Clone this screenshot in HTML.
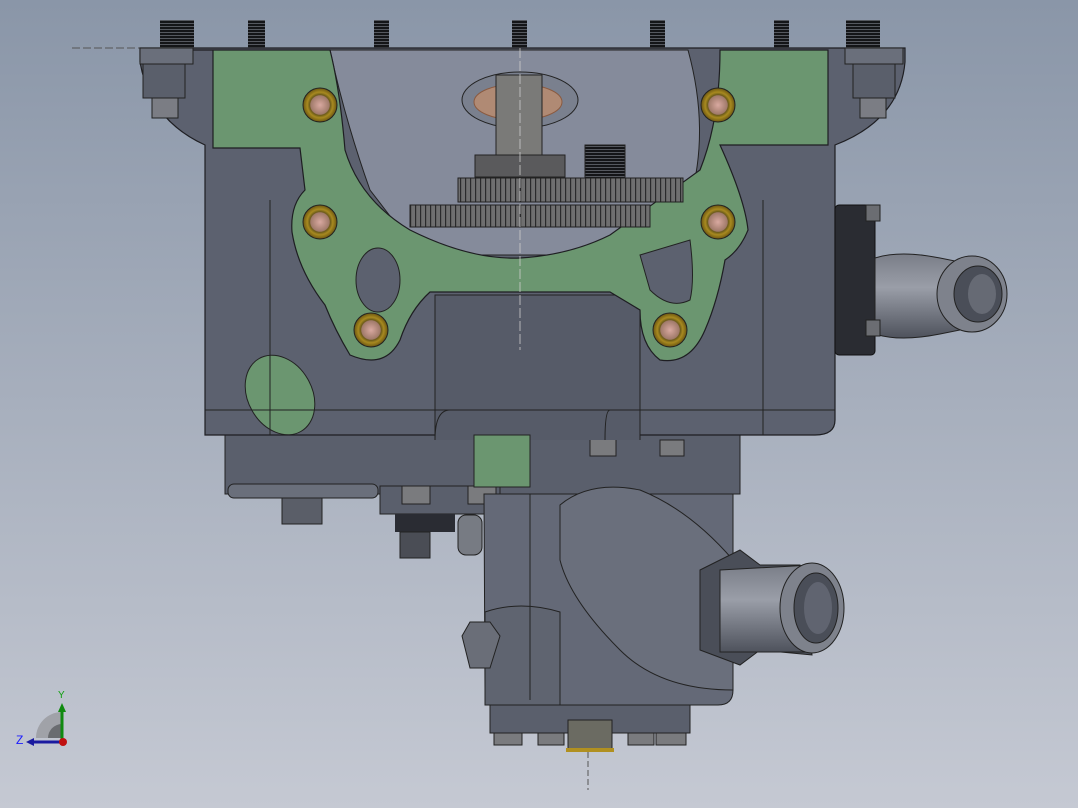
<!DOCTYPE html>
<html><head><meta charset="utf-8"><style>
html,body{margin:0;padding:0;width:1078px;height:808px;overflow:hidden}
svg{display:block}
</style></head><body>
<svg width="1078" height="808" viewBox="0 0 1078 808" xmlns="http://www.w3.org/2000/svg" font-family="Liberation Sans, sans-serif">
<defs>
<linearGradient id="bg" x1="0" y1="0" x2="0" y2="1">
<stop offset="0" stop-color="#8a96a8"/><stop offset="0.5" stop-color="#a7afbd"/><stop offset="1" stop-color="#c5c9d3"/>
</linearGradient>
<linearGradient id="pipe" x1="0" y1="0" x2="0" y2="1">
<stop offset="0" stop-color="#7a7e88"/><stop offset="0.4" stop-color="#9a9ea8"/><stop offset="1" stop-color="#4e525c"/>
</linearGradient>
<radialGradient id="boss" cx="0.5" cy="0.5" r="0.5">
<stop offset="0" stop-color="#d9a9a0"/><stop offset="0.55" stop-color="#a07a6a"/><stop offset="0.6" stop-color="#6b5a1a"/><stop offset="0.75" stop-color="#a88a20"/><stop offset="1" stop-color="#6b5510"/>
</radialGradient>
<pattern id="thread" width="4" height="3" patternUnits="userSpaceOnUse">
<rect width="4" height="3" fill="#55585f"/><rect width="4" height="2" fill="#141518"/>
</pattern>
<pattern id="teeth" width="5" height="4" patternUnits="userSpaceOnUse">
<rect width="5" height="4" fill="#6f6f70"/><rect width="1.2" height="4" fill="#2a2a2c"/>
</pattern>
</defs>
<rect width="1078" height="808" fill="url(#bg)"/>
<line x1="72" y1="48" x2="520" y2="48" stroke="#555" stroke-width="1" stroke-dasharray="8,3"/>

<!-- studs -->
<g fill="url(#thread)">
<rect x="160" y="20" width="34" height="28"/>
<rect x="248" y="20" width="17" height="28"/>
<rect x="374" y="20" width="15" height="28"/>
<rect x="512" y="20" width="15" height="28"/>
<rect x="650" y="20" width="15" height="28"/>
<rect x="774" y="20" width="15" height="28"/>
<rect x="846" y="20" width="34" height="28"/>
</g>

<!-- lower housing parts -->
<rect x="225" y="432" width="515" height="62" fill="#5a5f6c" stroke="#222" stroke-width="1"/>
<g fill="#7a7b7e" stroke="#222">
<rect x="495" y="436" width="24" height="10"/>
<rect x="590" y="438" width="26" height="18"/>
<rect x="660" y="440" width="24" height="16"/>
</g>
<rect x="228" y="484" width="150" height="14" rx="6" fill="#6a6f7b" stroke="#222"/>
<rect x="282" y="498" width="40" height="26" fill="#5a5e68" stroke="#222"/>
<rect x="380" y="486" width="120" height="28" fill="#5a5f6c" stroke="#222"/>
<rect x="402" y="486" width="28" height="18" fill="#7a7b7e" stroke="#222"/>
<rect x="468" y="486" width="28" height="18" fill="#7a7b7e" stroke="#222"/>
<rect x="395" y="514" width="60" height="18" fill="#2a2c33"/>
<rect x="400" y="532" width="30" height="26" fill="#4a4d55" stroke="#222"/>
<rect x="458" y="515" width="24" height="40" rx="8" fill="#777b83" stroke="#222"/>
<path d="M484 494 H733 V690 Q733 705 718 705 H500 Q485 705 485 690 Z" fill="#646977" stroke="#222"/>
<path d="M560 505 Q590 480 640 490 Q690 510 733 560 L733 690 Q660 690 620 650 Q570 600 560 560 Z" fill="#6a6f7c" stroke="#222"/>
<path d="M485 612 Q520 600 560 612 L560 705 H485 Z" fill="#5f6470" stroke="#222"/>
<line x1="530" y1="494" x2="530" y2="700" stroke="#222"/>
<rect x="490" y="705" width="200" height="28" fill="#5a5f6c" stroke="#222"/>
<g fill="#7a7b7e" stroke="#222">
<rect x="494" y="733" width="28" height="12"/><rect x="538" y="733" width="26" height="12"/>
<rect x="628" y="733" width="26" height="12"/><rect x="656" y="733" width="30" height="12"/>
</g>
<rect x="568" y="720" width="44" height="30" fill="#6b6b62" stroke="#222"/>
<rect x="566" y="748" width="48" height="4" fill="#b09020"/>
<polygon points="462,636 470,622 490,622 500,636 490,668 470,668" fill="#6a6e78" stroke="#222"/>
<line x1="588" y1="752" x2="588" y2="790" stroke="#555" stroke-dasharray="6,3"/>

<!-- lower pipe -->
<path d="M700 570 L740 550 L760 565 L800 565 L812 655 L760 650 L740 665 L700 650 Z" fill="#4a4e58" stroke="#222"/>
<path d="M720 570 L812 565 L812 652 L720 652 Z" fill="url(#pipe)" stroke="#222"/>
<ellipse cx="812" cy="608" rx="32" ry="45" fill="#7e828c" stroke="#222"/>
<ellipse cx="816" cy="608" rx="22" ry="35" fill="#4a4e58" stroke="#222"/>
<ellipse cx="818" cy="608" rx="14" ry="26" fill="#606470"/>

<!-- main body -->
<path d="M140 48 H905 V62 Q900 120 835 145 V420 Q835 435 815 435 H205 V145 Q150 120 140 62 Z" fill="#5c616f" stroke="#1e1e22" stroke-width="1.2"/>
<rect x="140" y="48" width="53" height="16" fill="#6a6f7b" stroke="#222"/>
<rect x="845" y="48" width="58" height="16" fill="#6a6f7b" stroke="#222"/>
<rect x="143" y="64" width="42" height="34" fill="#5a5f6b" stroke="#222"/>
<rect x="853" y="64" width="42" height="34" fill="#5a5f6b" stroke="#222"/>
<rect x="152" y="98" width="26" height="20" fill="#7b7d84" stroke="#222"/>
<rect x="860" y="98" width="26" height="20" fill="#7b7d84" stroke="#222"/>
<!-- inner cavity -->
<path d="M330 50 H688 Q710 130 690 200 L600 255 L420 255 L370 190 Q345 120 330 50 Z" fill="#858b9b" stroke="#222"/>
<path d="M435 440 V295 H640 V440" fill="#565b68" stroke="#222"/>
<!-- green gasket -->
<path fill="#6b9670" stroke="#1e1e22" stroke-width="1.2" d="
M193 50 H330 Q340 90 345 150 Q360 200 410 230 Q470 260 520 258 Q570 255 610 235 L700 170 Q720 120 720 50 H828 V145 H720 Q745 200 748 230 Q740 250 725 260 Q718 300 705 330 Q690 365 660 360 Q640 345 640 310 L610 292 H430 Q410 310 400 340 Q385 370 350 355 Q335 330 325 305 Q298 270 292 232 Q290 205 305 190 L300 148 L213 148 L213 50 Z"/>
<ellipse cx="378" cy="280" rx="22" ry="32" fill="#5c616f" stroke="#222"/>
<path d="M640 255 L690 240 Q695 280 690 300 Q670 310 650 290 Z" fill="#5c616f" stroke="#222"/>
<ellipse cx="280" cy="395" rx="32" ry="42" fill="#6b9670" stroke="#222" transform="rotate(-30 280 395)"/>
<rect x="474" y="435" width="56" height="52" fill="#6b9670" stroke="#222"/>
<!-- bosses -->
<g stroke="#222" stroke-width="1">
<circle cx="320" cy="105" r="17" fill="url(#boss)"/>
<circle cx="718" cy="105" r="17" fill="url(#boss)"/>
<circle cx="320" cy="222" r="17" fill="url(#boss)"/>
<circle cx="718" cy="222" r="17" fill="url(#boss)"/>
<circle cx="371" cy="330" r="17" fill="url(#boss)"/>
<circle cx="670" cy="330" r="17" fill="url(#boss)"/>
</g>
<!-- shaft & gears -->
<ellipse cx="520" cy="100" rx="58" ry="28" fill="#7a808e" stroke="#222"/>
<ellipse cx="518" cy="102" rx="44" ry="18" fill="#b08a74" stroke="#8a5a40"/>
<rect x="496" y="75" width="46" height="80" fill="#7a7a78" stroke="#222"/>
<rect x="475" y="155" width="90" height="22" fill="#5a5a5c" stroke="#222"/>
<rect x="585" y="145" width="40" height="35" fill="url(#thread)" stroke="#222"/>
<rect x="458" y="178" width="225" height="24" fill="url(#teeth)" stroke="#222"/>
<rect x="410" y="205" width="240" height="22" fill="url(#teeth)" stroke="#222"/>
<line x1="520" y1="48" x2="520" y2="350" stroke="#ccc" stroke-dasharray="10,3" stroke-width="0.8"/>
<!-- side lines -->
<g stroke="#222" fill="none" stroke-width="1">
<line x1="270" y1="200" x2="270" y2="435"/>
<line x1="763" y1="200" x2="763" y2="435"/>
<path d="M205 410 H835"/>
<path d="M435 440 Q435 410 450 410 M610 410 Q605 410 605 440"/>
</g>

<!-- right pipe -->
<rect x="835" y="205" width="40" height="150" rx="4" fill="#2a2c32" stroke="#111"/>
<path d="M875 258 Q900 250 940 258 L960 262 L960 330 L940 334 Q900 342 875 334 Z" fill="url(#pipe)" stroke="#222"/>
<ellipse cx="972" cy="294" rx="35" ry="38" fill="#7e828c" stroke="#222"/>
<ellipse cx="978" cy="294" rx="24" ry="28" fill="#4a4e58" stroke="#222"/>
<ellipse cx="982" cy="294" rx="14" ry="20" fill="#666a74"/>
<rect x="866" y="205" width="14" height="16" fill="#6b6d72" stroke="#222"/>
<rect x="866" y="320" width="14" height="16" fill="#6b6d72" stroke="#222"/>

<!-- triad -->
<path d="M36 738 A26 26 0 0 1 62 712 V738 Z" fill="#a0a2a8"/>
<path d="M48 738 A14 14 0 0 1 62 724 V738 Z" fill="#6a6c70"/>
<line x1="62" y1="742" x2="62" y2="712" stroke="#108a10" stroke-width="3"/>
<polygon points="58,712 66,712 62,703" fill="#108a10"/>
<line x1="62" y1="742" x2="34" y2="742" stroke="#1a1aa0" stroke-width="3"/>
<polygon points="34,738 34,746 26,742" fill="#1a1aa0"/>
<circle cx="63" cy="742" r="4" fill="#c01010"/>
<text x="58" y="698" font-size="10" fill="#10a010">Y</text>
<text x="16" y="744" font-size="12" fill="#1a1aff">Z</text>
</svg>
</body></html>
